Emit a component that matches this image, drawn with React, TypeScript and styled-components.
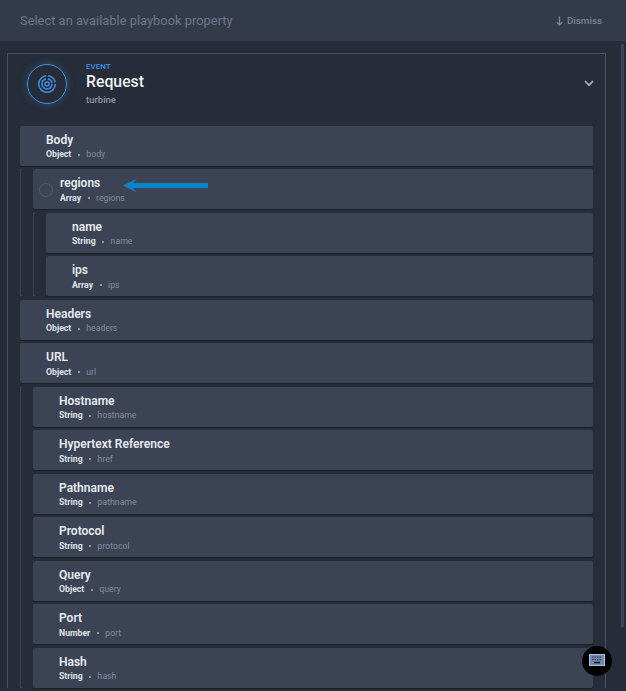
import React from "react"
import styled, { createGlobalStyle } from "styled-components"

const GlobalStyle = createGlobalStyle`
    html, body {
        margin: 0;
        height: 691px;
        overflow: hidden;
        background: #262c38;
        font-family: "Roboto", "Liberation Sans", sans-serif;
    }
`

type Prop = { title: string; type: string; path: string }

const urlProps: Prop[] = [
    { title: "Hostname", type: "String", path: "hostname" },
    { title: "Hypertext Reference", type: "String", path: "href" },
    { title: "Pathname", type: "String", path: "pathname" },
    { title: "Protocol", type: "String", path: "protocol" },
    { title: "Query", type: "Object", path: "query" },
    { title: "Port", type: "Number", path: "port" },
    { title: "Hash", type: "String", path: "hash" },
]

const PropertyRow = ({ title, type, path, active }: Prop & { active?: boolean }) => (
    <Row $active={active}>
        {active && <Radio />}
        <Title>{title}</Title>
        <Meta>
            <TypeName>{type}</TypeName>
            <Dot />
            <PathName>{path}</PathName>
        </Meta>
    </Row>
)

const App = () => {
    return (
        <Page>
            <GlobalStyle />
            <Header>
                <Prompt>Select an available playbook property</Prompt>
                <Dismiss>
                    <svg width="7" height="10" viewBox="0 0 7 10" fill="none" stroke="currentColor" strokeWidth="1.3">
                        <path d="M3.5 0.5V9M0.8 6.2l2.7 2.8 2.7-2.8" />
                    </svg>
                    Dismiss
                </Dismiss>
            </Header>
            <Track />
            <Panel>
                <EventHeader>
                    <EventIcon>
                        <svg width="20" height="20" viewBox="0 0 20 20" fill="none" stroke="#3f8fe6" strokeWidth="1.5">
                            <circle cx="10" cy="10" r="8.3" strokeDasharray="38 2 10 2" />
                            <circle cx="10" cy="10" r="5" strokeDasharray="22 2 6 1.5" />
                            <circle cx="10" cy="10" r="2" />
                        </svg>
                    </EventIcon>
                    <EventText>
                        <EventLabel>EVENT</EventLabel>
                        <EventTitle>Request</EventTitle>
                        <EventSource>turbine</EventSource>
                    </EventText>
                    <Chevron width="10" height="7" viewBox="0 0 10 7" fill="none" stroke="#a3abbd" strokeWidth="1.8">
                        <path d="M1 1.2l4 4 4-4" />
                    </Chevron>
                </EventHeader>
                <Tree>
                    <PropertyRow title="Body" type="Object" path="body" />
                    <Nested>
                        <ArrowMark width="86" height="15" viewBox="0 0 86 15">
                            <path d="M0 7.5L14 0.5 10 5H85V10H10L14 14.5Z" fill="#0a84c9" />
                        </ArrowMark>
                        <PropertyRow title="regions" type="Array" path="regions" active />
                        <Nested>
                            <PropertyRow title="name" type="String" path="name" />
                            <PropertyRow title="ips" type="Array" path="ips" />
                        </Nested>
                    </Nested>
                    <PropertyRow title="Headers" type="Object" path="headers" />
                    <PropertyRow title="URL" type="Object" path="url" />
                    <Nested>
                        {urlProps.map(p => (
                            <PropertyRow key={p.path} {...p} />
                        ))}
                    </Nested>
                </Tree>
            </Panel>
            <KeyboardButton>
                <svg width="16" height="12" viewBox="0 0 16 12">
                    <rect width="16" height="12" fill="#a9c0df" />
                    <rect x="1" y="1" width="14" height="10" fill="#7189ad" />
                    <path d="M3 2.5h1.5v1.2H3zM5.5 2.5H7v1.2H5.5zM8 2.5h1.5v1.2H8zM10.5 2.5H12v1.2h-1.5zM3 5h1.5v1.2H3zM5.5 5H7v1.2H5.5zM8 5h1.5v1.2H8zM10.5 5H12v1.2h-1.5z" fill="#3a3f58" />
                    <rect x="5" y="7.8" width="6" height="1.5" fill="#10141c" />
                </svg>
            </KeyboardButton>
        </Page>
    )
}

export default App

const Page = styled.div`
    position: relative;
    width: 626px;
    height: 691px;
    overflow: hidden;
    background: #262c38;
`

const Header = styled.header`
    height: 41px;
    padding: 0 24px 0 20px;
    box-sizing: border-box;
    display: flex;
    align-items: center;
    justify-content: space-between;
    background: #333a4a;
`

const Prompt = styled.span`
    font-size: 12.9px;
    color: #6f788c;
`

const Dismiss = styled.span`
    display: flex;
    align-items: center;
    gap: 4px;
    font-size: 9.8px;
    font-weight: 500;
    color: #7a849b;
`

const Track = styled.div`
    position: absolute;
    top: 44px;
    right: 2px;
    width: 3px;
    height: 583px;
    background: #3a4254;
`

const Panel = styled.section`
    margin: 12px 0 0 7px;
    width: 599px;
    box-sizing: border-box;
    padding: 0 12px;
    border: 1px solid #4a5268;
    border-bottom: 0;
`

const EventHeader = styled.div`
    height: 71.75px;
    display: flex;
    align-items: flex-start;
    position: relative;
`

const EventIcon = styled.div`
    width: 40px;
    height: 40px;
    margin: 10px 19px 0 7px;
    box-sizing: border-box;
    display: flex;
    align-items: center;
    justify-content: center;
    border-radius: 50%;
    border: 1px solid #3f8fe6;
    box-shadow: 0 0 8px rgba(63, 143, 230, 0.35);
`

const EventText = styled.div`
    display: flex;
    flex-direction: column;
    padding-top: 7px;
`

const EventLabel = styled.span`
    font-size: 8px;
    line-height: 11px;
    font-weight: 500;
    color: #3f8fe6;
`

const EventTitle = styled.span`
    font-size: 15.8px;
    line-height: 20px;
    font-weight: 500;
    color: #eef0f4;
`

const EventSource = styled.span`
    font-size: 9.5px;
    line-height: 16px;
    font-weight: 500;
    color: #8f97a8;
`

const Chevron = styled.svg`
    position: absolute;
    right: -1px;
    top: 26px;
`

const Tree = styled.div`
    display: flex;
    flex-direction: column;
    gap: 3.5px;
`

const Nested = styled.div`
    position: relative;
    display: flex;
    flex-direction: column;
    gap: 3.5px;
    padding-left: 12px;
    border-left: 1px solid #3c4356;

    &::before,
    &::after {
        content: "";
        position: absolute;
        left: -1px;
        width: 2px;
        height: 1px;
        background: #3c4356;
    }

    &::before {
        top: 0;
    }

    &::after {
        bottom: 0;
    }
`

const Row = styled.div<{ $active?: boolean }>`
    position: relative;
    height: 40px;
    box-sizing: border-box;
    padding: 7px 0 0 ${p => (p.$active ? 27 : 26)}px;
    background: #3b4355;
    border-radius: 2px;
    box-shadow: 0 1px 0 #1b1f28;
`

const Radio = styled.span`
    position: absolute;
    left: 6px;
    top: 14px;
    width: 14px;
    height: 14px;
    box-sizing: border-box;
    border: 1px solid #525b70;
    border-radius: 50%;
`

const Title = styled.div`
    font-size: 12px;
    line-height: 15px;
    font-weight: 600;
    color: #e8ebf0;
`

const Meta = styled.div`
    display: flex;
    align-items: center;
    gap: 6.5px;
    margin-top: 1.5px;
    font-size: 8.7px;
    line-height: 11px;
`

const TypeName = styled.span`
    font-weight: 700;
    color: #dfe2e8;
`

const Dot = styled.span`
    width: 2px;
    height: 2px;
    background: #8f97a8;
`

const PathName = styled.span`
    color: #858da0;
`

const ArrowMark = styled.svg`
    position: absolute;
    left: 102px;
    top: 8.5px;
    z-index: 1;
`

const KeyboardButton = styled.div`
    position: absolute;
    left: 582px;
    top: 646px;
    width: 30px;
    height: 28px;
    padding-bottom: 2px;
    display: flex;
    align-items: center;
    justify-content: center;
    border-radius: 50%;
    background: #000;
`
